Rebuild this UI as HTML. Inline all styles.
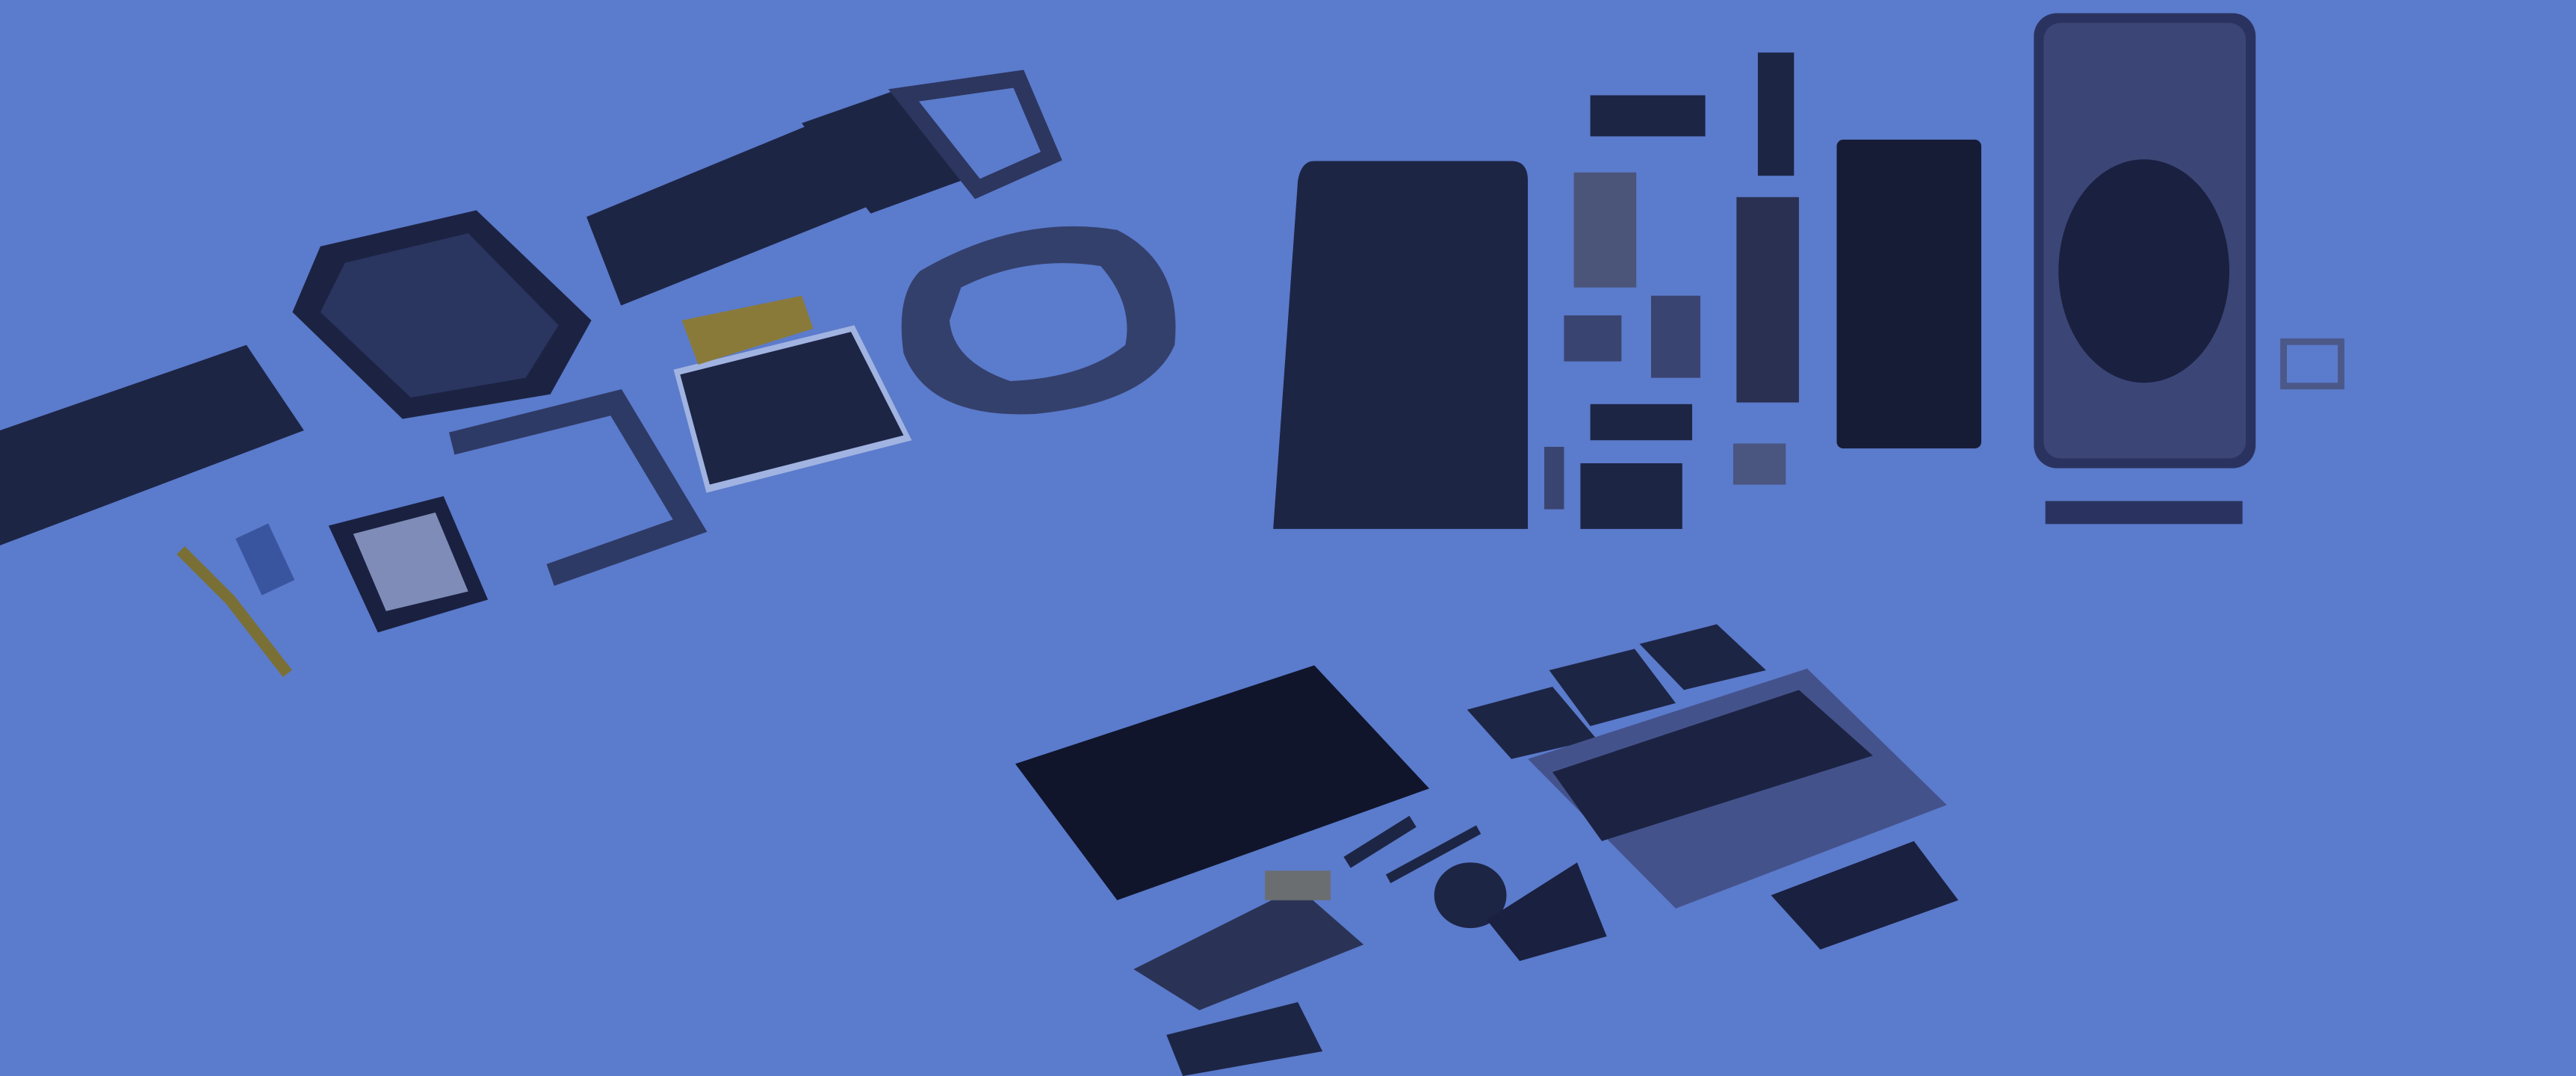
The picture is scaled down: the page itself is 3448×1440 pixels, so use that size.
<!DOCTYPE html>
<html><head><meta charset="utf-8"><style>
html,body{margin:0;padding:0;width:3448px;height:1440px;overflow:hidden;background:#5b7bcc}
svg{display:block}
</style></head><body>
<svg width="3448" height="1440" viewBox="0 0 1568 655" preserveAspectRatio="none">
<rect width="1568" height="655" fill="#5b7bcc"/>
<g fill="#1d2545">
<!-- watch band left -->
<polygon points="0,262 150,210 185,262 0,332"/>
<!-- watch case -->
<polygon points="195,150 290,128 360,195 335,240 245,255 178,190" fill="#1c2342"/>
<polygon points="210,160 285,142 340,198 320,230 250,242 195,190" fill="#2a3560"/>
<!-- top band -->
<polygon points="357,132 495,75 530,125 378,186"/>
<polygon points="488,75 545,55 585,110 530,130"/>
<path d="M550,58 L620,48 L640,95 L595,115 Z" fill="none" stroke="#2c365f" stroke-width="10"/>
<!-- ring -->
<path d="M560,165 Q620,130 680,140 Q720,160 715,210 Q700,245 630,252 Q565,255 550,215 Q545,180 560,165 Z" fill="#34406c"/>
<path d="M585,175 Q625,155 670,162 Q690,185 685,210 Q660,230 615,232 Q580,220 578,195 Z" fill="#5b7bcc"/>
<!-- display -->
<polygon points="410,225 520,198 555,268 430,300" fill="#e8ecf5" opacity=".5"/>
<polygon points="414,228 518,202 550,265 432,295"/>
<polygon points="415,195 488,180 495,200 425,222" fill="#8a7a3a"/>
<!-- board frame -->
<path d="M275,270 L375,245 L420,320 L335,350" fill="none" stroke="#2e3a66" stroke-width="14"/>
<!-- battery -->
<polygon points="200,320 270,302 297,365 230,385" fill="#1a2040"/>
<polygon points="215,325 265,312 285,360 235,372" fill="#7f8cb8"/>
<!-- flex -->
<path d="M110,335 L140,365 L175,410" stroke="#7a7035" stroke-width="7" fill="none"/>
<rect x="150" y="322" width="22" height="38" fill="#3a55a0" transform="rotate(-25 160 340)"/>
<!-- phone front -->
<path d="M800,98 L920,98 Q930,98 930,110 L930,322 L775,322 L790,110 Q792,98 800,98 Z"/>
<!-- small parts -->
<rect x="958" y="105" width="38" height="70" fill="#4b557a"/>
<rect x="968" y="58" width="70" height="25"/>
<rect x="1005" y="180" width="30" height="50" fill="#3a4470"/>
<rect x="952" y="192" width="35" height="28" fill="#3a4470"/>
<rect x="968" y="246" width="62" height="22"/>
<rect x="962" y="282" width="62" height="40"/>
<rect x="940" y="272" width="12" height="38" fill="#3a4470"/>
<rect x="1055" y="270" width="32" height="25" fill="#4a5580"/>
<rect x="1070" y="32" width="22" height="75"/>
<rect x="1057" y="120" width="38" height="125" fill="#2a3052"/>
<!-- battery iphone -->
<rect x="1118" y="85" width="88" height="188" rx="4" fill="#161c36"/>
<!-- phone back -->
<rect x="1238" y="8" width="135" height="277" rx="14" fill="#2a3360"/>
<rect x="1244" y="14" width="123" height="265" rx="10" fill="#3b4676"/>
<ellipse cx="1305" cy="165" rx="52" ry="68" fill="#1a2040"/>
<rect x="1390" y="208" width="35" height="27" fill="none" stroke="#4b5888" stroke-width="4"/>
<rect x="1245" y="305" width="120" height="14" fill="#2a3360"/>
<!-- laptop display -->
<polygon points="618,465 800,405 870,480 680,548" fill="#10152b"/>
<!-- batteries -->
<polygon points="893,432 945,418 972,450 920,462"/>
<polygon points="943,408 995,395 1020,428 968,442"/>
<polygon points="998,392 1045,380 1075,408 1025,420"/>
<!-- keyboard deck -->
<polygon points="930,462 1100,407 1185,490 1020,553" fill="#44528c"/>
<polygon points="945,470 1095,420 1140,460 975,512" fill="#1c2342"/>
<!-- trackpad -->
<polygon points="1078,545 1165,512 1192,548 1108,578" fill="#1a2040"/>
<!-- parts bottom -->
<polygon points="690,590 790,540 830,575 730,615" fill="#2a3356"/>
<polygon points="710,630 790,610 805,640 720,655"/>
<ellipse cx="895" cy="545" rx="22" ry="20"/>
<path d="M905,560 L960,525 L978,570 L925,585 Z" fill="#1a2040"/>
<rect x="770" y="530" width="40" height="18" fill="#6b6e70"/>
<path d="M820,525 L860,500" stroke="#1d2545" stroke-width="8"/>
<path d="M845,535 L900,505" stroke="#1d2545" stroke-width="6"/>
</g>
</svg>
</body></html>
